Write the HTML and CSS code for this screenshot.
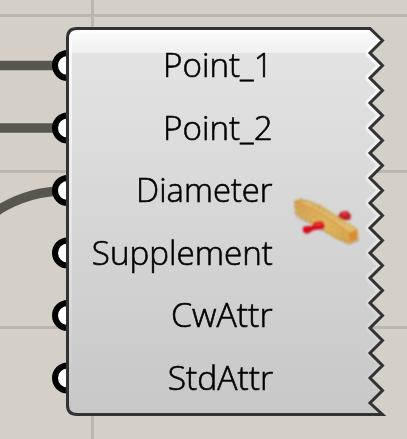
FILE: index.html
```
<!DOCTYPE html>
<html lang="en">
<head>
<meta charset="utf-8">
<title>Component</title>
<link rel="stylesheet" href="styles.css">
</head>
<body>
<main class="canvas">
  <svg class="art" viewBox="0 0 407 439" aria-hidden="true">
    <defs>
      <linearGradient id="body" gradientUnits="userSpaceOnUse" x1="0" y1="53" x2="0" y2="415">
        <stop offset="0" stop-color="#e3e3e3"/><stop offset="1" stop-color="#c7c7c7"/>
      </linearGradient>
      <linearGradient id="gloss" gradientUnits="userSpaceOnUse" x1="0" y1="29" x2="0" y2="53">
        <stop offset="0" stop-color="#fcfcfc"/><stop offset="1" stop-color="#f0f0f0"/>
      </linearGradient>
      <linearGradient id="edge" gradientUnits="userSpaceOnUse" x1="0" y1="29" x2="0" y2="405">
        <stop offset="0" stop-color="#fff"/><stop offset="1" stop-color="#fff" stop-opacity="0"/>
      </linearGradient>
      <linearGradient id="wood" x1="0" y1="0" x2="1" y2="1">
        <stop offset="0" stop-color="#cf9f55"/><stop offset=".5" stop-color="#dfb760"/><stop offset="1" stop-color="#d3a34b"/>
      </linearGradient>
      <filter id="soft"><feGaussianBlur stdDeviation=".8"/></filter>
      <path id="shape" d="M77 28.5H370L382.5 40.5 370 53 382.5 65.5 370 78 382.5 90.5 370 103 382.5 115.5 370 128 382.5 140.5 370 153 382.5 165.5 370 178 382.5 190.5 370 203 382.5 215.5 370 228 382.5 240.5 370 253 382.5 265.5 370 278 382.5 290.5 370 303 382.5 315.5 370 328 382.5 340.5 370 353 382.5 365.5 370 378 382.5 390.5 370 403 382.5 414.5H77Q67.5 414.5 67.5 405V38Q67.5 28.5 77 28.5Z"/>
      <clipPath id="clip"><use href="#shape"/></clipPath>
    </defs>
    <path class="grid" d="M0 15.5H407M0 171.5H407M0 327.5H407M92.5 0V439"/>
    <path class="wire" d="M0 65.5H60M0 128H60M67 190.5C42 191 18 198 0 209L-12 218"/>
    <g class="ports">
      <circle cx="67.5" cy="65.5" r="12.5"/><circle cx="67.5" cy="128" r="12.5"/>
      <circle cx="67.5" cy="190.5" r="12.5"/><circle cx="67.5" cy="253" r="12.5"/>
      <circle cx="67.5" cy="315.5" r="12.5"/><circle cx="67.5" cy="378" r="12.5"/>
    </g>
    <g clip-path="url(#clip)">
      <path fill="url(#body)" d="M60 20H390V420H60Z"/>
      <path fill="url(#gloss)" d="M60 20H390V53H60Z"/>
      <use class="highlight" href="#shape"/>
    </g>
    <use class="outline" href="#shape"/>
    <g filter="url(#soft)">
      <path fill="#777" opacity=".45" d="M296 217L309 224 349 245 359 241 358 235Z"/>
      <path fill="#c01c2b" d="M333 220L338 216 341 212 347 211 351 215 350 220 341 220 333 224Z"/>
      <path fill="url(#wood)" d="M294 201L300 199 309 201 320 205 333 213 344 221 358 229 358 240 349 244 334 238 322 229 309 223 296 215Z"/>
      <path fill="#dfbc70" d="M299 201L312 203 336 216 357 229 350 232 330 221 313 210Z"/>
      <path fill="none" stroke="#c79c4b" stroke-width="1.2" stroke-dasharray="3 3" d="M297 207L311 215 324 222M299 213L311 219M331 226L346 235M331 232L346 239M312 205L330 215 345 224"/>
      <path fill="none" stroke="#e09a43" stroke-width="1.8" d="M296 202L311 208 329 219 349 233V241"/>
      <path fill="#d98d35" d="M349 233L357 230 357 239 350 242Z"/>
      <path fill="none" stroke="#9a7c3d" stroke-width="1" stroke-dasharray="2 3" d="M295 201V214M300 199L311 202 331 213 347 222 356 229M296 215L311 222 332 236 346 242"/>
      <path fill="#d5101b" d="M303 227L307 226 312 226 314 222 322 221 325 225 324 229 314 230 307 234 303 232Z"/>
      <path fill="none" stroke="#f8453c" stroke-width="1.4" d="M315 225L322 224M342 214L347 214"/>
    </g>
  </svg>
  <section class="inputs">
    <div class="row"><span class="label point-1">Point_1</span></div>
    <div class="row"><span class="label point-2">Point_2</span></div>
    <div class="row"><span class="label diameter">Diameter</span></div>
    <div class="row"><span class="label supplement">Supplement</span></div>
    <div class="row"><span class="label cw">CwAttr</span></div>
    <div class="row"><span class="label std">StdAttr</span></div>
  </section>
</main>
</body>
</html>
```
FILE: styles.css
```
body { margin: 0; background: #d4d0c8; }
.canvas { display: grid; width: 407px; height: 439px; overflow: hidden; }
.art, .inputs { grid-area: 1 / 1; }
.art { width: 407px; height: 439px; }
.grid { fill: none; stroke: #bbb7b0; stroke-width: 3; }
.wire { fill: none; stroke: #575651; stroke-width: 9.3; }
.ports { fill: #fff; stroke: #000; stroke-width: 6; }
.highlight { fill: none; stroke: url(#edge); stroke-width: 9; stroke-linejoin: round; stroke-opacity: .8; }
.outline { fill: none; stroke: #323232; stroke-width: 3; }
.inputs {
  z-index: 1;
  display: grid;
  grid-template-rows: repeat(6, 62.5px);
  width: 273px;
  padding-top: 33px;
  font: 300 33.5px/62.5px "Open Sans", "Noto Sans", sans-serif;
  color: #000;
  -webkit-text-stroke: .6px #000;
}
.row { display: flex; justify-content: flex-end; }
.label { transform-origin: right center; white-space: nowrap; }
.point-1, .point-2 { transform: scaleX(.99); }
.diameter { transform: scaleX(.978); }
.supplement { transform: scaleX(.99); }
.cw { transform: scaleX(1.01); }
.std { transform: scaleX(1.003); }
```
